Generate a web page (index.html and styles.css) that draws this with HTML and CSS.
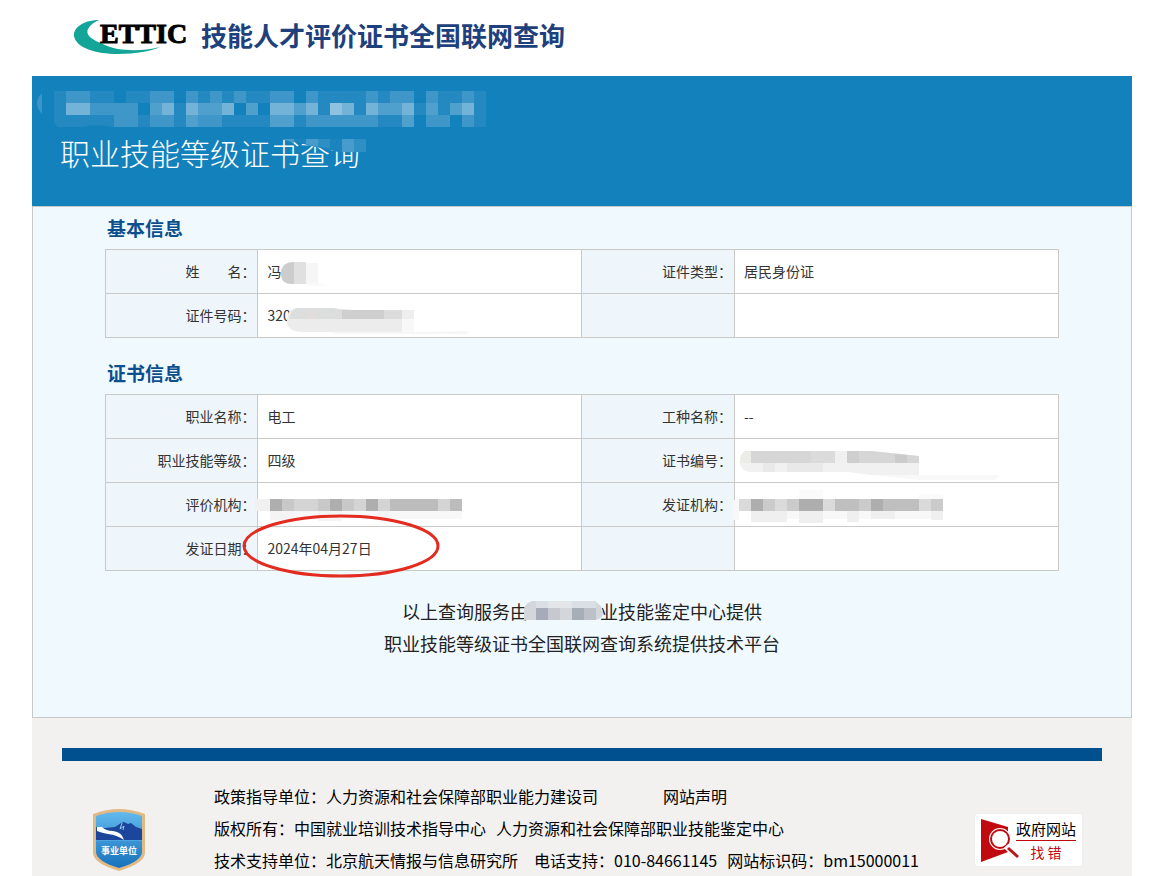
FILE: index.html
```html
<!DOCTYPE html>
<html lang="zh-CN">
<head>
<meta charset="UTF-8">
<meta name="viewport" content="width=device-width, initial-scale=1.0">
<title>技能人才评价证书全国联网查询</title>
<link rel="stylesheet" href="styles.css">
</head>
<body>

<div class="header">
<svg class="logo" width="118" height="40" viewBox="0 0 118 40" role="img" aria-label="ETTIC">
<path d="M27 2C10 2 1 11 2 18C4 30 24 36 46 36C64 36 80 33 88 29C68 34 46 33 33 27C20 22 13 17 16 11C18 7 22 4 27 2Z" fill="#12a598"/>
<text x="28" y="25" class="logo-text">ETTIC</text>
</svg>
<h1>技能人才评价证书全国联网查询</h1>
</div>

<div class="main">

<div class="banner">
<h2>职业技能等级证书查询</h2>
<svg class="mask mask-banner" width="460" height="80" viewBox="0 0 460 80" aria-hidden="true">
<path d="M10 17Q0 27 10 38Z" fill="#3b95c8"/>
<path d="M22 15H454V51H82Q60 47 52 51H26L22 47Z" fill="#2489c1"/>
<g fill="#fff">
<path opacity=".12" d="M34 15h24v12h-24zM118 15h24v12h-24zM154 15h12v12h-12zM178 15h12v12h-12zM202 15h12v12h-12zM238 15h24v12h-24zM274 15h12v12h-12zM334 15h12v12h-12zM358 15h24v12h-24zM394 15h12v12h-12zM430 15h12v12h-12zM118 39h24v12h-24zM166 39h24v12h-24zM274 39h36v12h-36zM310 39h36v12h-36zM394 39h24v12h-24zM430 39h12v12h-12zM58 27h48v12h-48zM82 39h24v12h-24z"/>
<path opacity=".2" d="M118 27h12v12h-12zM166 27h24v12h-24zM214 27h12v12h-12zM262 27h12v12h-12zM298 27h12v12h-12zM346 27h24v12h-24zM394 27h12v12h-12zM418 27h12v12h-12zM154 39h12v12h-12zM370 39h12v12h-12zM238 39h24v12h-24z"/>
<path opacity=".36" d="M34 27h24v12h-24zM130 27h12v12h-12zM154 27h12v12h-12zM190 27h12v12h-12zM238 27h24v12h-24zM274 27h12v12h-12zM298 27h24v12h-24zM334 27h12v12h-12zM370 27h12v12h-12zM430 27h12v12h-12z"/>
</g>
<path fill="#1381bc" d="M142 15h12v12h-12zM106 27h12v12h-12zM202 27h12v12h-12zM226 27h12v12h-12zM82 15h12v12h-12zM262 15h12v12h-12zM382 15h12v12h-12zM382 39h12v12h-12zM418 39h12v12h-12z"/>
<path fill="#1b84be" d="M250 63H334V76H306L284 71Z"/>
<path fill="#479ccb" d="M250 63h12v4zM274 63h12v8l-12-3zM310 63h12v13h-12z"/>
<path fill="#2e8fc4" d="M286 63h12v10l-12-3zM322 63h12v13h-12z"/>
</svg>
</div>

<div class="content">

<h3>基本信息</h3>
<table>
<tr>
<th scope="row">姓&#12288;&#8194;&#8194;名：</th>
<td>冯
<svg class="mask" width="220" height="43" viewBox="0 0 220 43" aria-hidden="true">
<path d="M36 12V34H34Q23 34 23 24Q23 12 36 12Z" fill="#ccc"/>
<path d="M36 12h12v22h-12z" fill="#e0e0e0"/>
<path d="M48 13h12v21h-12z" fill="#f6f6f6"/>
<path d="M60 33l12 3h-24v-2z" fill="#fafafa"/>
</svg>
</td>
<th scope="row">证件类型：</th>
<td>居民身份证</td>
</tr>
<tr>
<th scope="row">证件号码：</th>
<td>320
<svg class="mask" width="220" height="43" viewBox="0 0 220 43" aria-hidden="true">
<path d="M40 14H74Q84 16 96 16H156V38H45Q29 38 29 27Q29 14 40 14Z" fill="#ececec"/>
<path d="M40 14H74Q84 16 96 16H120V25H31Q34 14 40 14Z" fill="#dcdddd"/>
<path d="M84 16h42v9h-42z" fill="#cfcfd0"/>
<path d="M48 15h12v10h-12z" fill="#e0dddd"/>
<path d="M126 16h18v9h-18z" fill="#dcdcdc"/>
<path d="M144 16h12v9h-12z" fill="#eee"/>
<path d="M144 25h12v13h-12z" fill="#f8f8f8"/>
<path d="M73 38H150L212 37L208 40H78Z" fill="#f6f6f6"/>
</svg>
</td>
<th></th>
<td></td>
</tr>
</table>

<h3 class="second">证书信息</h3>
<table>
<tr>
<th scope="row">职业名称：</th>
<td>电工</td>
<th scope="row">工种名称：</th>
<td>--</td>
</tr>
<tr>
<th scope="row">职业技能等级：</th>
<td>四级</td>
<th scope="row">证书编号：</th>
<td>
<svg class="mask" width="280" height="43" viewBox="0 0 280 43" aria-hidden="true">
<path d="M12 12H136L184 17V36H136L112 33H14Q4 31 5 22Q6 12 12 12Z" fill="#f1f1f1"/>
<path d="M16 12H136L184 17V24H16Z" fill="#d6d6d6"/>
<path d="M10 12h6v12h-11q0-9 5-12z" fill="#ebebe8"/>
<path d="M76 12h24v12h-24z" fill="#dbdbdb"/>
<path d="M100 12h12v12h-12z" fill="#f0f0f0"/>
<path d="M112 12h12v12h-12z" fill="#cecece"/>
<path d="M160 15l12 1v8h-12z" fill="#cbcbcb"/>
<path d="M52 24h36v9h-36zM28 24h12v9h-12z" fill="#e9e9e9"/>
<path d="M136 36H265L260 41H186Z" fill="#f8f8f8"/>
</svg>
</td>
</tr>
<tr>
<th scope="row">评价机构：</th>
<td>
<svg class="mask mask-wide" width="220" height="43" viewBox="-4 0 220 43" aria-hidden="true">
<path d="M-3 16h15v12h-15z" fill="#f0f0f0"/>
<path d="M12 28h192v8H12z" fill="#f8f8f8"/>
<path d="M12 28h24v9h-24zM60 28h24v10h-24zM120 28h12v8h-12z" fill="#f4f4f4"/>
<path d="M12 16h192v12H12z" fill="#bcbcbc"/>
<path d="M24 16h36v12h-36zM84 16h24v12h-24zM120 16h12v12h-12zM180 16h12v12h-12z" fill="#d4d4d4"/>
<path d="M24 16h12v12h-12zM60 16h12v12h-12zM84 16h12v12h-12z" fill="#c8c8c8"/>
<path d="M12 16h12v12h-12zM72 16h12v12h-12zM108 16h12v12h-12z" fill="#aeaeae"/>
</svg>
</td>
<th scope="row">发证机构：</th>
<td>
<svg class="mask mask-wide" width="220" height="43" viewBox="-4 0 220 43" aria-hidden="true">
<path d="M-2 17h6v20h-6z" fill="#f8f8f8"/>
<path d="M16 28h192v8H16z" fill="#f8f8f8"/>
<path d="M64 7h24v9h-24zM184 11h24v5h-24z" fill="#fafafa"/>
<path d="M16 28h36v11h-36zM64 28h24v12h-24zM112 28h12v11h-12zM136 28h24v8h-24zM196 28h12v9h-12z" fill="#efefef"/>
<path d="M4 16h204v12H4z" fill="#bfbfbf"/>
<path d="M4 16h12v12h-12zM28 16h24v12h-24zM88 16h12v12h-12zM184 16h12v12h-12z" fill="#dadada"/>
<path d="M28 16h12v12h-12zM52 16h12v12h-12zM124 16h12v12h-12zM196 16h12v12h-12z" fill="#cbcbcb"/>
<path d="M16 16h12v12h-12zM64 16h24v12h-24zM136 16h12v12h-12z" fill="#aeaeae"/>
</svg>
</td>
</tr>
<tr>
<th scope="row">发证日期：</th>
<td>2024年04月27日
<svg class="circle" width="200" height="66" viewBox="0 0 200 66" aria-hidden="true">
<ellipse cx="100" cy="33" rx="97" ry="30" fill="none" stroke="#e42b20" stroke-width="3"/>
</svg>
</td>
<th></th>
<td></td>
</tr>
</table>

<div class="service">
<p>以上查询服务由<span class="hidden-name"><svg width="80" height="22" viewBox="0 0 80 22" aria-hidden="true">
<path d="M8 1H70Q79 5 79 13Q78 20 70 20H0V8Q2 3 8 1Z" fill="#d3d7db"/>
<path d="M12 1h12v7h-12zM48 1h24v7h-24z" fill="#dadfe5"/>
<path d="M24 1h24v7h-24z" fill="#e3e5e8"/>
<path d="M12 8h12v12h-12z" fill="#a5abb8"/>
<path d="M24 8h12v12h-12z" fill="#c6c9d0"/>
<path d="M48 8h12v12h-12z" fill="#a6afb8"/>
<path d="M60 8h12v12h-12z" fill="#bcc0c8"/>
</svg></span>业技能鉴定中心提供</p>
<p>职业技能等级证书全国联网查询系统提供技术平台</p>
</div>

</div>
</div>

<div class="footer">
<div class="line"></div>
<div class="info">

<a href="#" class="shield">
<svg width="52" height="62" viewBox="0 0 52 62" role="img" aria-label="事业单位">
<defs>
<linearGradient id="sky" x1="0" y1="0" x2="0" y2="1">
<stop offset="0" stop-color="#63b9ec"/>
<stop offset="1" stop-color="#1672bd"/>
</linearGradient>
</defs>
<path d="M26 0Q38 0 52 5V44Q52 54 26 62Q0 54 0 44V5Q14 0 26 0Z" fill="#e3b983"/>
<path d="M26 3Q38 3 49 7V43Q49 52 26 59Q3 52 3 43V7Q14 3 26 3Z" fill="url(#sky)"/>
<path d="M3 31V18L12 19L22 18L28 14L31 13L35 15L38 14L43 18L49 20V31Z" fill="#1b469b"/>
<path d="M4 18L9 18Q13 22 20 22Q29 23 31 31Q24 26 15 25Q9 24 4 22Z" fill="#fff"/>
<path d="M29 14L27 20L31 17L30 21" fill="none" stroke="#8fcdf2" stroke-width="1"/>
<path d="M3 31h46v1h-46z" fill="#4aa5e0"/>
<text x="26" y="45" text-anchor="middle" class="shield-text">事业单位</text>
</svg>
</a>

<div class="text">
<p class="wide"><span>政策指导单位：人力资源和社会保障部职业能力建设司</span><a href="#">网站声明</a></p>
<p><span>版权所有：中国就业培训技术指导中心</span><span>人力资源和社会保障部职业技能鉴定中心</span></p>
<p><span>技术支持单位：北京航天情报与信息研究所</span><span class="tel">电话支持：010-84661145</span><span>网站标识码：bm15000011</span></p>
</div>

<a href="#" class="error">
<svg width="35" height="43" viewBox="0 0 35 43" aria-hidden="true">
<path d="M0 0L27 8V33L0 43Z" fill="#c00a10"/>
<circle cx="19" cy="20" r="11" fill="#fff"/>
<circle cx="19" cy="20" r="10" fill="#c00a10"/>
<circle cx="19" cy="20" r="8" fill="#fff"/>
<path d="M25 27L29 31" stroke="#fff" stroke-width="6"/>
<path d="M27 29L37 38" stroke="#b5191b" stroke-width="3"/>
</svg>
<span class="error-text"><span class="top">政府网站</span><span class="bottom">找 错</span></span>
</a>

</div>
</div>

</body>
</html>
```

FILE: styles.css
```css
*{
margin: 0;
padding: 0;
box-sizing: border-box;
}

body{
padding: 0 22px 0 32px;
background: #fff;
color: #000;
font-family: "Noto Sans CJK SC", "Microsoft YaHei", sans-serif;
font-size: 14px;
}

a{
color: inherit;
text-decoration: none;
}

.header{
display: flex;
align-items: center;
gap: 11px;
height: 76px;
padding-left: 40px;
}

.header h1{
font-size: 26px;
line-height: 70px;
height: 76px;
color: #1e407c;
}

.logo-text{
font-family: "Liberation Serif", serif;
font-size: 28px;
font-weight: bold;
stroke: #000;
stroke-width: 1px;
}

.banner{
position: relative;
height: 130px;
padding: 54px 0 0 28px;
background: #1381bc;
}

.banner h2{
font-size: 30px;
font-weight: 300;
line-height: 44px;
color: #fff;
}

/* 遮挡 */
.mask{
position: absolute;
left: 0;
top: 0;
}

.mask-wide{
left: -4px;
}

.content{
border: 1px solid #c8c9c7;
background: #eff9fe;
padding: 0 72px 58px;
}

.content h3{
padding-left: 2px;
font-size: 19px;
line-height: 42px;
color: #0b4f8d;
}

.content .second{
margin-top: 14px;
}

table{
width: 100%;
table-layout: fixed;
border-collapse: collapse;
}

tr{
height: 44px;
}

th, td{
position: relative;
border: 1px solid #c9c9c5;
padding-bottom: 2px;
color: #333;
line-height: 20px;
}

th{
width: 16%;
padding-right: 2px;
background: #eef6fb;
font-weight: normal;
text-align: right;
}

td{
width: 34%;
padding-left: 9px;
background: #fff;
}

.circle{
position: absolute;
left: -17px;
top: -14px;
z-index: 1;
}

.service{
margin-top: 24px;
font-size: 18px;
line-height: 32px;
text-align: center;
color: #222;
}

.hidden-name{
position: relative;
display: inline-block;
width: 72px;
height: 20px;
vertical-align: middle;
}

.hidden-name svg{
position: absolute;
left: -4px;
top: -4px;
}

.footer{
padding: 30px 30px 0;
background: #f2f1f0;
}

.line{
height: 13px;
background: #00508f;
}

.info{
display: flex;
align-items: flex-start;
padding: 19px 19px 0 31px;
}

.shield{
margin: 29px 69px 0 0;
}

.shield svg{
display: block;
}

.shield-text{
font-size: 9px;
font-weight: bold;
fill: #fff;
}

.text{
flex: 1;
font-size: 16px;
line-height: 32px;
}

.text p{
display: flex;
gap: 10px;
white-space: nowrap;
}

.text .wide{
gap: 65px;
}

.text .tel{
margin-left: 6px;
}

.error{
display: flex;
align-items: center;
width: 109px;
height: 54px;
margin-top: 33px;
padding-left: 6px;
border: 1px solid #eee;
border-radius: 4px;
background: #fff;
}

.error svg{
flex: none;
overflow: visible;
}

.error-text{
text-align: center;
white-space: nowrap;
}

.error-text span{
display: block;
}

.error-text .top{
border-bottom: 1px solid #c00a10;
font-size: 15px;
line-height: 22px;
}

.error-text .bottom{
font-size: 14px;
line-height: 22px;
color: #c00a10;
}
```
